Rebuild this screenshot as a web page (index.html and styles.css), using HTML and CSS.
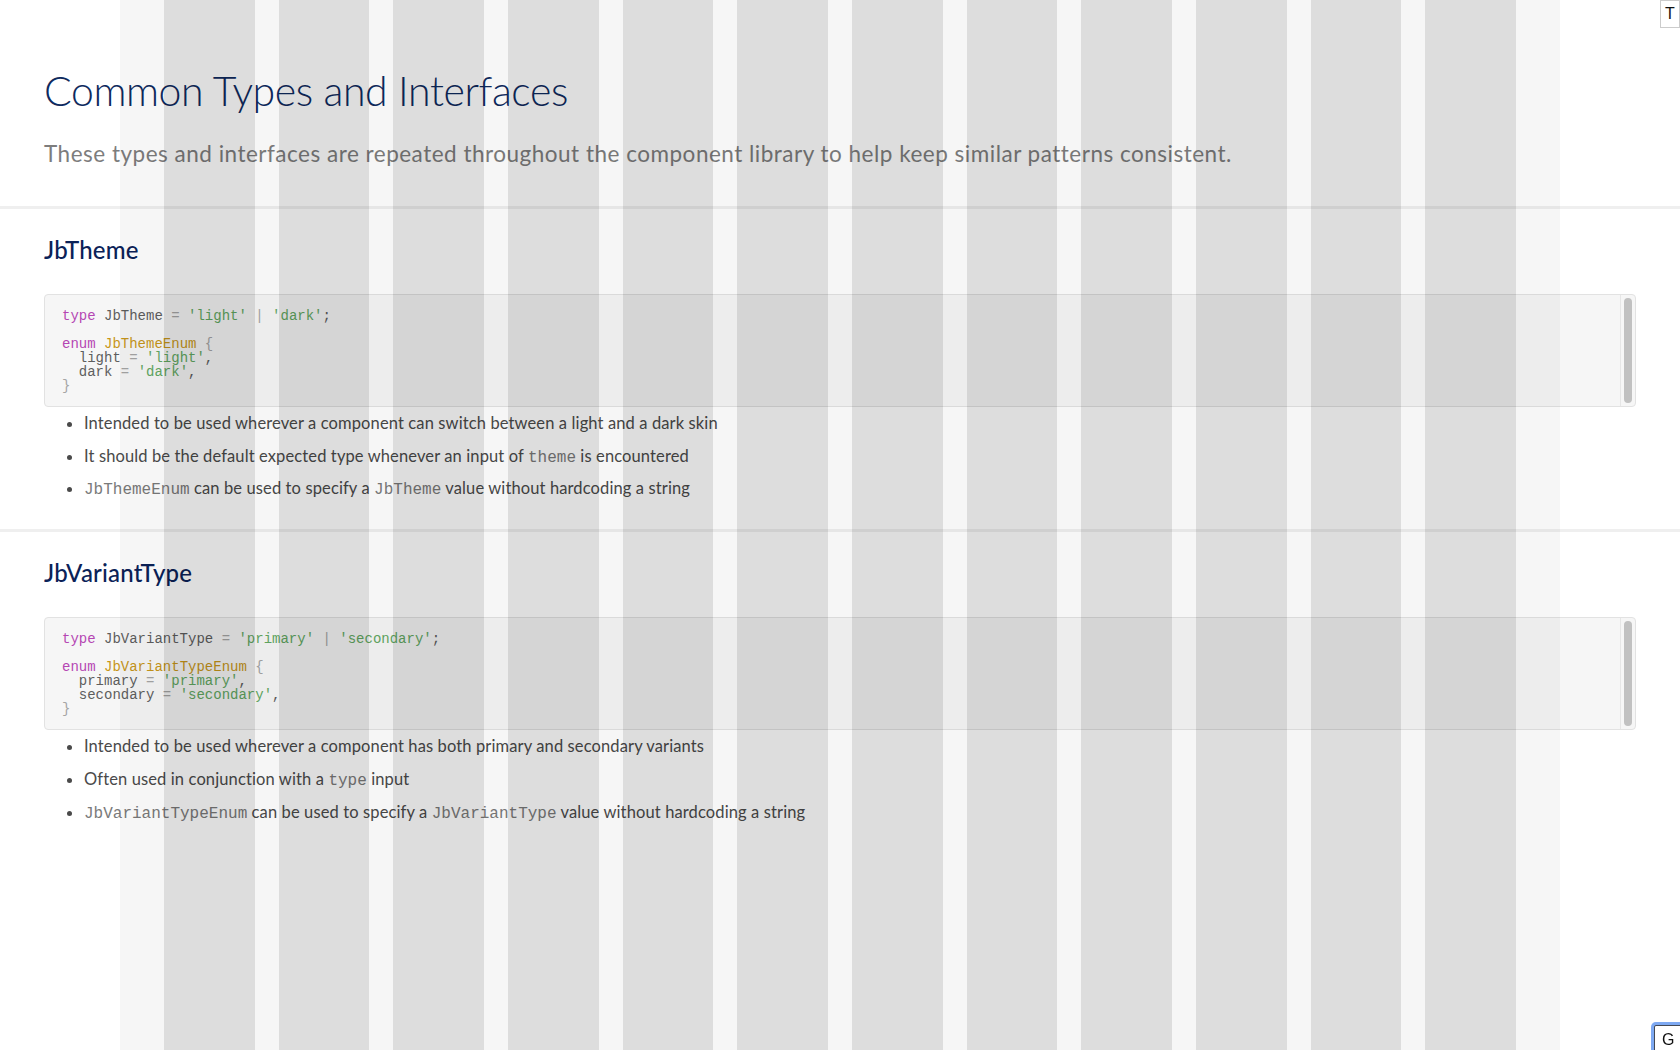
FILE: index.html
```html
<!DOCTYPE html>
<html lang="en">
<head>
<meta charset="utf-8">
<title>Common Types and Interfaces</title>
<link rel="stylesheet" href="styles.css">
</head>
<body>
<header class="page-header">
  <h1 class="page-title">Common Types and Interfaces</h1>
  <p class="page-lead">These types and interfaces are repeated throughout the component library to help keep similar patterns consistent.</p>
</header>

<section class="doc-section">
  <h2 class="section-title">JbTheme</h2>
  <div class="code-block">
<pre class="code"><span class="kw">type</span> JbTheme <span class="op">=</span> <span class="str">'light'</span> <span class="op">|</span> <span class="str">'dark'</span>;

<span class="kw">enum</span> <span class="ttl">JbThemeEnum</span> <span class="op">{</span>
  light <span class="op">=</span> <span class="str">'light'</span>,
  dark <span class="op">=</span> <span class="str">'dark'</span>,
<span class="op">}</span></pre>
    <div class="scrollbar"><div class="thumb"></div></div>
  </div>
  <ul class="notes">
    <li>Intended to be used wherever a component can switch between a light and a dark skin</li>
    <li>It should be the default expected type whenever an input of <code>theme</code> is encountered</li>
    <li><code>JbThemeEnum</code> can be used to specify a <code>JbTheme</code> value without hardcoding a string</li>
  </ul>
</section>

<section class="doc-section">
  <h2 class="section-title">JbVariantType</h2>
  <div class="code-block">
<pre class="code"><span class="kw">type</span> JbVariantType <span class="op">=</span> <span class="str">'primary'</span> <span class="op">|</span> <span class="str">'secondary'</span>;

<span class="kw">enum</span> <span class="ttl">JbVariantTypeEnum</span> <span class="op">{</span>
  primary <span class="op">=</span> <span class="str">'primary'</span>,
  secondary <span class="op">=</span> <span class="str">'secondary'</span>,
<span class="op">}</span></pre>
    <div class="scrollbar"><div class="thumb"></div></div>
  </div>
  <ul class="notes">
    <li>Intended to be used wherever a component has both primary and secondary variants</li>
    <li>Often used in conjunction with a <code>type</code> input</li>
    <li><code>JbVariantTypeEnum</code> can be used to specify a <code>JbVariantType</code> value without hardcoding a string</li>
  </ul>
</section>

<div class="grid-overlay" aria-hidden="true">
  <div class="grid-inner">
    <div class="col"></div><div class="col"></div><div class="col"></div><div class="col"></div>
    <div class="col"></div><div class="col"></div><div class="col"></div><div class="col"></div>
    <div class="col"></div><div class="col"></div><div class="col"></div><div class="col"></div>
  </div>
</div>

<button class="tool-btn tool-top" type="button">T</button>
<button class="tool-btn tool-bottom" type="button">G</button>
</body>
</html>
```

FILE: styles.css
```css
html, body {
  margin: 0;
  padding: 0;
  background: #ffffff;
}

body {
  font-family: "Lato", "Open Sans", sans-serif;
  color: #4a4a4a;
}

.page-header {
  padding: 66px 44px 37px;
  border-bottom: 3px solid #efefef;
}

.page-title {
  margin: 0;
  font-size: 41px;
  line-height: 50px;
  font-weight: 300;
  letter-spacing: -0.4px;
  color: #0e2a5e;
}

.page-lead {
  margin: 23px 0 0;
  font-size: 22.5px;
  line-height: 30px;
  font-weight: 400;
  letter-spacing: 0.5px;
  color: #7d7d7d;
}

.doc-section {
  padding: 26px 44px 29px;
  border-bottom: 3px solid #efefef;
}

.doc-section:last-of-type {
  border-bottom: none;
}

.section-title {
  margin: 0 0 29px;
  font-size: 24px;
  line-height: 30px;
  font-weight: 500;
  letter-spacing: 0.2px;
  color: #0b2258;
}

.code-block {
  display: flex;
  background: #f6f6f6;
  border: 1px solid #e2e2e2;
  border-radius: 4px;
}

.code {
  flex: 1;
  margin: 0;
  padding: 14px 17px 13px;
  font-family: "Liberation Mono", "Courier New", monospace;
  font-size: 14px;
  line-height: 14px;
  color: #5e5e5e;
}

.kw { color: #b546b3; }
.str { color: #62a862; }
.ttl { color: #c8961a; }
.op { color: #a5a5a5; }

.scrollbar {
  width: 15px;
  box-sizing: border-box;
  border-left: 1px solid #e6e6e6;
  padding: 3px;
  display: flex;
}

.thumb {
  flex: 1;
  background: #c1c1c1;
  border-radius: 4px;
}

.notes {
  margin: 4px 0 0;
  padding-left: 40px;
}

.notes li {
  font-size: 16.5px;
  line-height: 24px;
  letter-spacing: 0.12px;
}

.notes li + li {
  margin-top: 8.7px;
}

.notes code {
  font-family: "Liberation Mono", "Courier New", monospace;
  font-size: 16px;
  line-height: 1;
  letter-spacing: 0;
  color: #7a7a7a;
}

.grid-overlay {
  position: fixed;
  inset: 0;
  display: flex;
  justify-content: center;
  pointer-events: none;
  z-index: 10;
}

.grid-inner {
  width: 1440px;
  box-sizing: border-box;
  padding: 0 44px;
  background: rgba(0, 0, 0, 0.035);
  display: grid;
  grid-template-columns: repeat(12, 1fr);
  column-gap: 24px;
}

.col {
  background: rgba(0, 0, 0, 0.1);
}

.tool-btn {
  position: fixed;
  z-index: 20;
  margin: 0;
  padding: 0;
  font-family: "Liberation Sans", Arial, sans-serif;
  font-size: 16px;
  color: #111;
  background: #ffffff;
  box-sizing: border-box;
}

.tool-top {
  top: 0;
  right: 0;
  width: 20px;
  height: 28px;
  border: 1px solid #cccccc;
  line-height: 26px;
}

.tool-bottom {
  left: 1654px;
  top: 1025px;
  width: 30px;
  height: 30px;
  border: 1px solid #444a55;
  border-radius: 2px;
  box-shadow: 0 0 0 3px #7ea9f2;
  line-height: 24px;
  text-align: left;
  padding-left: 7px;
}
```
